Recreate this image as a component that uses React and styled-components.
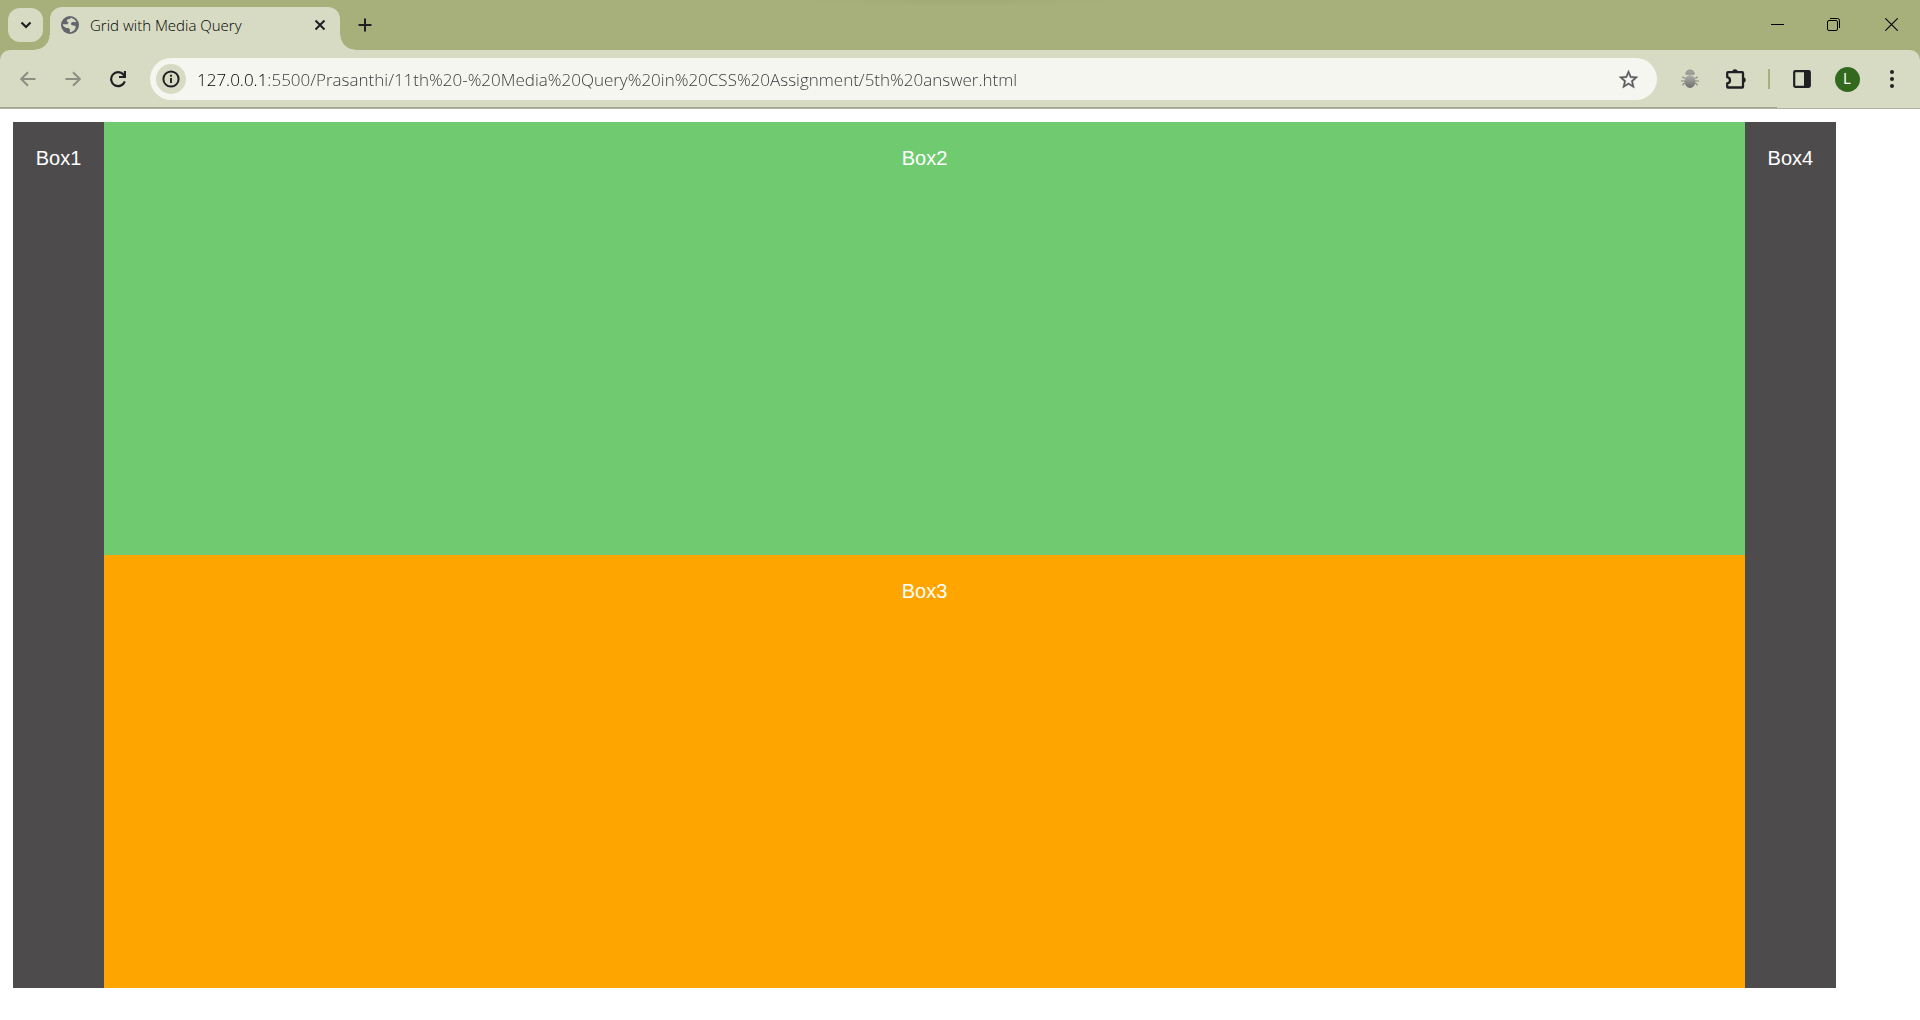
import React from "react";
import styled, { createGlobalStyle } from "styled-components";

const frame = "#a7af7b";
const surface = "#d7dbc3";
const ink = "#1f2023";

const GlobalStyle = createGlobalStyle`
  *, *::before, *::after { box-sizing: border-box; }
  html, body, #root { height: 100%; }
  body {
    margin: 0;
    background: #fff;
    font-family: "Open Sans", "Noto Sans", sans-serif;
  }
`;

const Window = styled.div`
  min-height: 100%;
  display: flex;
  flex-direction: column;
`;

const BrowserChrome = styled.header`
  background: ${frame};
`;

const TabStrip = styled.div`
  height: 50px;
  padding-left: 8px;
  display: flex;
  align-items: flex-start;
  background: radial-gradient(170px 6px at 50% 0, #a1a975, transparent) no-repeat;
`;

const IconButton = styled.button`
  width: ${(p) => p.$w || 32}px;
  height: ${(p) => p.$h || 32}px;
  padding: 0;
  border: 0;
  border-radius: ${(p) => p.$radius || 16}px;
  background: ${(p) => p.$bg || "transparent"};
  color: ${(p) => p.$color || ink};
  display: flex;
  align-items: center;
  justify-content: center;
  flex: none;
`;

const TabSearch = styled(IconButton)`
  margin: 8px 7px 0 0;
`;

const Tab = styled.div`
  position: relative;
  width: 290px;
  height: 43px;
  margin-top: 7px;
  padding: 0 10px 7px;
  display: flex;
  align-items: center;
  border-radius: 12px 12px 0 0;
  background: ${surface};

  &::before,
  &::after {
    content: "";
    position: absolute;
    bottom: 0;
    width: 15px;
    height: 15px;
  }
  &::before {
    right: 100%;
    background: radial-gradient(circle at 0 0, transparent 14px, ${surface} 15px);
  }
  &::after {
    left: 100%;
    background: radial-gradient(circle at 100% 0, transparent 14px, ${surface} 15px);
  }
`;

const TabTitle = styled.span`
  flex: 1;
  margin-left: 10px;
  font-size: 15px;
  font-weight: 300;
  line-height: 20px;
  color: #000;
  white-space: nowrap;
`;

const NewTab = styled(IconButton)`
  margin: 9px 0 0 9px;
`;

const WindowControls = styled.div`
  margin-left: auto;
  display: flex;
`;

const Toolbar = styled.div`
  position: relative;
  height: 59px;
  padding: 8px 12px;
  display: flex;
  align-items: center;
  background: ${surface};
  border-radius: 10px 10px 0 0;
  border-bottom: 1px solid #b0b39c;

  &::after {
    content: "";
    position: absolute;
    bottom: 0;
    left: 0;
    right: 143px;
    height: 1px;
    background: #a1a48c;
  }
`;

const Navigation = styled.nav`
  display: flex;
  gap: 13px;
`;

const AddressBar = styled.form`
  flex: 1;
  height: 42px;
  margin-left: 16px;
  padding: 0 13px 0 6px;
  display: flex;
  align-items: center;
  border-radius: 21px;
  background: #f5f6ef;
`;

const Address = styled.input`
  flex: 1;
  min-width: 0;
  height: 30px;
  margin-left: 11px;
  padding: 0;
  border: 0;
  outline: 0;
  font: 300 17px/24px "Open Sans", "Noto Sans", sans-serif;
  color: #35363a;
  background: linear-gradient(90deg, #000 67px, #35363a 67px);
  -webkit-background-clip: text;
  background-clip: text;
  -webkit-text-fill-color: transparent;
`;

const Actions = styled.div`
  display: flex;
  align-items: center;
  margin-left: 17px;
`;

const Divider = styled.span`
  width: 2px;
  height: 20px;
  margin: 0 16px 0 2px;
  background: ${frame};
`;

const Avatar = styled.span`
  width: 25px;
  height: 25px;
  border-radius: 50%;
  background: #33691e;
  color: #fff;
  font: 14px/25px Roboto, sans-serif;
  text-align: center;
`;

const Page = styled.main`
  flex: 1;
  display: flex;
  padding: 13px 84px 32px 13px;
`;

const Grid = styled.div`
  flex: 1;
  display: grid;
  grid-template-columns: 5% 90% 5%;
  grid-template-rows: 1fr 1fr;
`;

const Box = styled.section`
  grid-row: ${(p) => p.$row};
  grid-column: ${(p) => p.$column};
  padding-top: 25px;
  background: ${(p) => p.$bg};
  color: #fff;
  font: 20px/23px "Liberation Sans", Arial, sans-serif;
  text-align: center;
`;

const Chevron = () => (
  <svg width="12" height="8" viewBox="0 0 12 8" fill="none" stroke="currentColor" strokeWidth="2.2">
    <path d="M1.5 1.5 6 6l4.5-4.5" />
  </svg>
);

const Globe = () => (
  <svg width="20" height="20" viewBox="0 0 20 20">
    <circle cx="10" cy="10" r="9" fill="#63656d" />
    <path
      d="M10.500 2.800c2 .2 4.700 1.700 5.900 4.200l-1.900.3-1.300-.6-2 1.100-.2 1.600 1.900 1.200 2.300.2.6 1.500-1.500 2.900-3.300 2-1.200-.2.2-2.500-1.500-1.500H6.200L3.300 11l-.6-1.800 4.800.1 1.100-2-2-.8 1-2.200 2.200-.2z"
      fill={surface}
    />
  </svg>
);

const Cross = () => (
  <svg width="12" height="12" viewBox="0 0 12 12" stroke="currentColor" strokeWidth="2">
    <path d="m1.500 1.500 9 9m0-9-9 9" />
  </svg>
);

const Plus = () => (
  <svg width="14" height="14" viewBox="0 0 14 14" stroke="currentColor" strokeWidth="2">
    <path d="M7 .5v13M.5 7h13" />
  </svg>
);

const Arrow = ({ flip }) => (
  <svg width="16" height="16" viewBox="0 0 16 16" fill="none" stroke="currentColor" strokeWidth="2">
    <path d={flip ? "M.5 8h14M8 1.200 14.800 8 8 14.800" : "M15.500 8h-14M8 1.200 1.200 8 8 14.800"} />
  </svg>
);

const Reload = () => (
  <svg width="18" height="18" viewBox="0 0 18 18" fill="none" stroke="currentColor" strokeWidth="2.2">
    <path d="M15.800 11.300A7 7 0 1 1 14.600 4.700L15.800 6.200" />
    <path d="M15.900 1v6H10" />
  </svg>
);

const Info = () => (
  <svg width="18" height="18" viewBox="0 0 18 18" fill="none" stroke="currentColor">
    <circle cx="9" cy="9" r="7.600" strokeWidth="2" />
    <path d="M9 8v5M9 4.800v1.900" strokeWidth="1.900" />
  </svg>
);

const Star = () => (
  <svg width="23" height="23" viewBox="0 0 24 24">
    <path
      fill="currentColor"
      d="M22 9.240l-7.190-.62L12 2 9.190 8.630 2 9.240l5.460 4.730L5.820 21 12 17.270 18.180 21l-1.630-7.030L22 9.240zM12 15.400l-3.760 2.270 1-4.280-3.320-2.880 4.380-.38L12 6.100l1.710 4.040 4.380.38-3.320 2.880 1 4.280L12 15.400z"
      stroke="currentColor"
      strokeWidth=".3"
    />
  </svg>
);

const Bug = () => (
  <svg width="18" height="20" viewBox="0 0 18 20">
    <defs>
      <linearGradient id="shell" x1="0" y1="0" x2="0" y2="1">
        <stop offset="0" stopColor="#b0b0ac" />
        <stop offset="1" stopColor="#6e6e6e" />
      </linearGradient>
    </defs>
    <path
      d="M4.500 9H2.800L1.500 7.800M4 12H0M4.500 14.500H2.800L1.500 16.500M13.500 9h1.700l1.300-1.200M14 12h4M13.500 14.500h1.700l1.300 2"
      fill="none"
      stroke="#85867e"
      strokeWidth="1.200"
    />
    <path d="M4.800 5.200C4.800 2.700 6.500 1 9 1s4.200 1.700 4.200 4.200z" fill="#a2a29e" stroke="#858681" strokeWidth=".8" />
    <ellipse cx="9" cy="12.500" rx="5.500" ry="6.500" fill="url(#shell)" />
  </svg>
);

const Puzzle = () => (
  <svg width="22" height="22" viewBox="0 0 22 22">
    <path
      d="M3 4.200h14.200q.8 0 .8.800v13.700q0 .8-.8.800H3q-.8 0-.8-.8v-3.200c2.600-.5 2.800-1.700 2.800-3s-.4-3-2.800-3.300V5q0-.8.800-.8z"
      fill="none"
      stroke="currentColor"
      strokeWidth="2.300"
      strokeLinejoin="round"
    />
    <path d="M7.300 4a2.700 2.700 0 0 1 5.400 0zM18 9.200a2.700 2.700 0 0 1 0 5.400z" fill="currentColor" />
  </svg>
);

const SidePanel = () => (
  <svg width="18" height="18" viewBox="0 0 18 18">
    <rect x="1.200" y="1.200" width="15.600" height="15.600" rx="1" fill="none" stroke="currentColor" strokeWidth="2.200" />
    <path d="M11 1h6v16h-6z" fill="currentColor" />
  </svg>
);

const Dots = () => (
  <svg width="4" height="18" viewBox="0 0 4 18" fill="currentColor">
    <circle cx="2" cy="2" r="2" />
    <circle cx="2" cy="9" r="2" />
    <circle cx="2" cy="16" r="2" />
  </svg>
);

const Minimize = () => (
  <svg width="13" height="13" viewBox="0 0 13 13" stroke="#000">
    <path d="M0 6.500h13" />
  </svg>
);

const Restore = () => (
  <svg width="13" height="13" viewBox="0 0 13 13" fill="none" stroke="#000">
    <rect x=".5" y="2.500" width="10" height="10" rx="1.500" />
    <path d="M3 .5h7.500a2 2 0 0 1 2 2V10" />
  </svg>
);

const CloseWindow = () => (
  <svg width="13" height="13" viewBox="0 0 13 13" stroke="#000" strokeWidth="1.100">
    <path d="m.3.3 12.400 12.400m0-12.400L.3 12.700" />
  </svg>
);

const boxes = [
  { label: "Box1", row: "1 / 3", column: 1, bg: "#4d4b4c" },
  { label: "Box2", row: 1, column: 2, bg: "#70cb70" },
  { label: "Box3", row: 2, column: 2, bg: "#ffa500" },
  { label: "Box4", row: "1 / 3", column: 3, bg: "#4d4b4c" },
];

export default function App() {
  return (
    <Window>
      <GlobalStyle />
      <BrowserChrome>
        <TabStrip>
          <TabSearch $w={35} $h={34} $radius={12} $bg={surface} aria-label="Search tabs"><Chevron /></TabSearch>
          <Tab>
            <Globe />
            <TabTitle>Grid with Media Query</TabTitle>
            <IconButton $w={20} $h={20} aria-label="Close tab"><Cross /></IconButton>
          </Tab>
          <NewTab aria-label="New tab"><Plus /></NewTab>
          <WindowControls>
            <IconButton $w={56} $h={49} aria-label="Minimize"><Minimize /></IconButton>
            <IconButton $w={57} $h={49} aria-label="Restore"><Restore /></IconButton>
            <IconButton $w={58} $h={49} aria-label="Close window"><CloseWindow /></IconButton>
          </WindowControls>
        </TabStrip>
        <Toolbar>
          <Navigation aria-label="History">
            <IconButton $color="#8d8f83" aria-label="Back"><Arrow /></IconButton>
            <IconButton $color="#8d8f83" aria-label="Forward"><Arrow flip /></IconButton>
            <IconButton aria-label="Reload"><Reload /></IconButton>
          </Navigation>
          <AddressBar>
            <IconButton type="button" $w={30} $h={30} $bg={surface} aria-label="Site information"><Info /></IconButton>
            <Address
              type="text"
              aria-label="Address"
              defaultValue="127.0.0.1:5500/Prasanthi/11th%20-%20Media%20Query%20in%20CSS%20Assignment/5th%20answer.html"
            />
            <IconButton type="button" $color="#5b5c5e" aria-label="Bookmark this page"><Star /></IconButton>
          </AddressBar>
          <Actions>
            <IconButton aria-label="Debugger extension"><Bug /></IconButton>
            <IconButton $w={60} aria-label="Extensions"><Puzzle /></IconButton>
            <Divider />
            <IconButton aria-label="Side panel"><SidePanel /></IconButton>
            <IconButton $w={58} aria-label="Profile"><Avatar>L</Avatar></IconButton>
            <IconButton aria-label="Menu"><Dots /></IconButton>
          </Actions>
        </Toolbar>
      </BrowserChrome>
      <Page>
        <Grid>
          {boxes.map((box) => (
            <Box key={box.label} $row={box.row} $column={box.column} $bg={box.bg}>
              {box.label}
            </Box>
          ))}
        </Grid>
      </Page>
    </Window>
  );
}
